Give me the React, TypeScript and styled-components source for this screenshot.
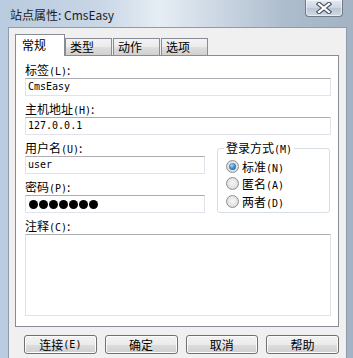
import React from "react";
import styled, {createGlobalStyle} from "styled-components";

const GlobalStyle = createGlobalStyle`
  html, body {
    margin: 0;
    padding: 0;
  }
  body {
    width: 353px;
    height: 358px;
    overflow: hidden;
    font-family: "Noto Sans CJK SC", "Liberation Sans", sans-serif;
    font-size: 12px;
    color: #000;
  }
`

const Frame = styled.div`
  width: 353px;
  height: 358px;
  box-sizing: border-box;
  padding: 0 6px 0 8px;
  display: flex;
  flex-direction: column;
  background: linear-gradient(90deg, #b9cbdf 0%, #c8d6e6 28%, #e6edf4 45%, #d2dce8 58%, #aebdcd 80%, #a3b3c4 100%);
`

const TitleBar = styled.div`
  height: 27px;
  flex-shrink: 0;
  display: flex;
  justify-content: space-between;
  align-items: flex-start;
`

const Title = styled.div`
  padding: 6px 0 0 2px;
  line-height: 17px;
  color: #1c1c1c;
`

const CloseButton = styled.div`
  width: 38px;
  height: 17px;
  box-sizing: border-box;
  margin-right: 4px;
  border: 1px solid #6f7b89;
  border-top: none;
  border-radius: 0 0 4px 4px;
  background: linear-gradient(#e4eaf1 0%, #ccd6e1 50%, #b9c6d4 52%, #d0dae5 100%);
  box-shadow: inset 0 0 0 1px rgba(255, 255, 255, 0.5);
  display: flex;
  align-items: center;
  justify-content: center;
`

const Client = styled.div`
  flex: 1;
  background: #f0f0f0;
  border: 1px solid #8d9bab;
  border-bottom: none;
  padding: 6px 7px 0 6px;
  display: flex;
  flex-direction: column;
`

const TabStrip = styled.div`
  display: flex;
  align-items: flex-end;
  height: 22px;
  margin-bottom: -1px;
  position: relative;
  z-index: 1;
`

const Tab = styled.div<{ $active?: boolean }>`
  box-sizing: border-box;
  width: ${p => p.$active ? 50 : 47}px;
  height: ${p => p.$active ? 22 : 18}px;
  margin-left: ${p => p.$active ? 0 : 1}px;
  border: 1px solid #898c95;
  border-bottom: ${p => p.$active ? "none" : "1px solid #898c95"};
  background: ${p => p.$active
    ? "#fff"
    : "linear-gradient(#f3f3f3 0%, #ebebeb 50%, #dedede 52%, #d0d0d0 100%)"};
  padding: ${p => p.$active ? "2px 0 0 6px" : "0 0 0 4px"};
  line-height: 16px;
  font-size: 12px;

  &:nth-child(2) {
    margin-left: 0;
  }
`

const Panel = styled.div`
  background: #fff;
  border: 1px solid #898c95;
  width: 324px;
  box-sizing: border-box;
  padding: 5px 7px 10px 9px;
  display: flex;
  flex-direction: column;
  gap: 4px;
`

const Field = styled.div`
  display: flex;
  flex-direction: column;
`

const Label = styled.div`
  height: 17px;
  line-height: 17px;
  white-space: nowrap;
`

const Key = styled.span`
  font-family: "DejaVu Sans Mono", monospace;
  font-size: 10px;
`

const Input = styled.div`
  height: 18px;
  box-sizing: border-box;
  border: 1px solid #e2e3ea;
  border-top-color: #abadb3;
  padding: 0 2px;
  font-family: "DejaVu Sans Mono", monospace;
  font-size: 10px;
  line-height: 16px;
  display: flex;
  align-items: center;
`

const TextArea = styled(Input)`
  height: 82px;
`

const Dots = styled.div`
  display: flex;
  gap: 1px;
  padding-left: 1px;
`

const Dot = styled.span`
  width: 9px;
  height: 9px;
  border-radius: 50%;
  background: #000;
`

const Columns = styled.div`
  display: flex;
  gap: 12px;
`

const LeftColumn = styled.div`
  width: 180px;
  display: flex;
  flex-direction: column;
  gap: 4px;
`

const Group = styled.fieldset`
  margin: 0;
  width: 113px;
  box-sizing: border-box;
  border: 1px solid #d5dfe5;
  border-radius: 3px;
  padding: 0 0 2px 8px;
  display: flex;
  flex-direction: column;
  height: 74px;
`

const Legend = styled.legend`
  padding: 0 2px;
  margin-left: -2px;
  line-height: 17px;
  white-space: nowrap;
`

const RadioRow = styled.label`
  display: flex;
  align-items: center;
  gap: 3px;
  height: 18px;
  white-space: nowrap;
`

const RadioCircle = styled.span<{ $checked?: boolean }>`
  width: 13px;
  height: 13px;
  box-sizing: border-box;
  border-radius: 50%;
  border: 1px solid #8f8f8f;
  background: radial-gradient(circle at 50% 45%, #f7f7f7 0%, #e3e3e3 55%, #cfcfcf 100%);
  display: flex;
  align-items: center;
  justify-content: center;

  &::after {
    content: "";
    display: ${p => p.$checked ? "block" : "none"};
    width: 7px;
    height: 7px;
    border-radius: 50%;
    background: radial-gradient(circle at 40% 35%, #a8dcf7 0%, #3f8fd0 45%, #1c5290 100%);
  }
`

const ButtonRow = styled.div`
  display: flex;
  gap: 8px;
  padding: 8px 0 0 9px;
`

const Button = styled.div`
  width: 73px;
  height: 19px;
  box-sizing: border-box;
  border: 1px solid #707070;
  border-radius: 3px;
  background: linear-gradient(#f2f2f2 0%, #ebebeb 50%, #dddddd 52%, #cfcfcf 100%);
  box-shadow: inset 0 0 0 1px #fcfcfc;
  display: flex;
  align-items: center;
  justify-content: center;
  line-height: 16px;
`

function Radio({text, mnemonic, checked}: { text: string, mnemonic: string, checked?: boolean }) {
    return (
        <RadioRow>
            <RadioCircle $checked={checked}/>
            <span>{text}<Key>({mnemonic})</Key></span>
        </RadioRow>
    );
}

export default function App() {
    return (
        <>
            <GlobalStyle/>
            <Frame>
                <TitleBar>
                    <Title>站点属性: CmsEasy</Title>
                    <CloseButton>
                        <svg width="16" height="12" viewBox="0 0 16 12">
                            <path d="M3 2 L13 10 M13 2 L3 10" stroke="#4d5865" strokeWidth="4.5" strokeLinecap="square"/>
                            <path d="M3 2 L13 10 M13 2 L3 10" stroke="#fff" strokeWidth="2.2" strokeLinecap="square"/>
                        </svg>
                    </CloseButton>
                </TitleBar>
                <Client>
                    <TabStrip>
                        <Tab $active>常规</Tab>
                        <Tab>类型</Tab>
                        <Tab>动作</Tab>
                        <Tab>选项</Tab>
                    </TabStrip>
                    <Panel>
                        <Field>
                            <Label>标签<Key>(L)</Key>:</Label>
                            <Input>CmsEasy</Input>
                        </Field>
                        <Field>
                            <Label>主机地址<Key>(H)</Key>:</Label>
                            <Input>127.0.0.1</Input>
                        </Field>
                        <Columns>
                            <LeftColumn>
                                <Field>
                                    <Label>用户名<Key>(U)</Key>:</Label>
                                    <Input>user</Input>
                                </Field>
                                <Field>
                                    <Label>密码<Key>(P)</Key>:</Label>
                                    <Input>
                                        <Dots>
                                            {Array.from({length: 7}).map((_, i) => <Dot key={i}/>)}
                                        </Dots>
                                    </Input>
                                </Field>
                            </LeftColumn>
                            <Group>
                                <Legend>登录方式<Key>(M)</Key></Legend>
                                <Radio text="标准" mnemonic="N" checked/>
                                <Radio text="匿名" mnemonic="A"/>
                                <Radio text="两者" mnemonic="D"/>
                            </Group>
                        </Columns>
                        <Field>
                            <Label>注释<Key>(C)</Key>:</Label>
                            <TextArea/>
                        </Field>
                    </Panel>
                    <ButtonRow>
                        <Button>连接<Key>(E)</Key></Button>
                        <Button>确定</Button>
                        <Button>取消</Button>
                        <Button>帮助</Button>
                    </ButtonRow>
                </Client>
            </Frame>
        </>
    );
}
